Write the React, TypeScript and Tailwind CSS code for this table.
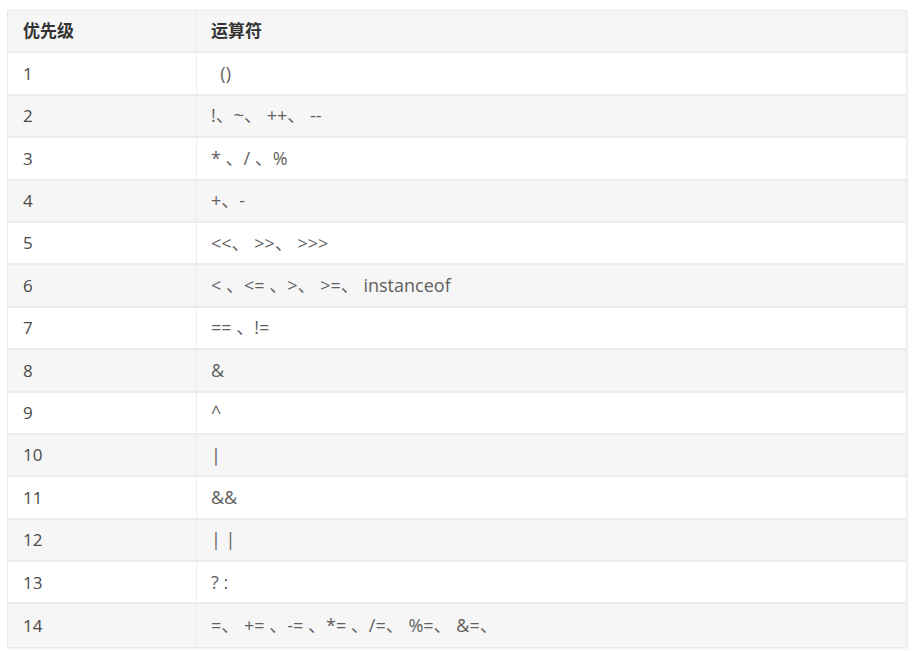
const rows: [string, string][] = [
  ["1", "  ()"],
  ["2", "!、~、 ++、 --"],
  ["3", "* 、/ 、%"],
  ["4", "+、-"],
  ["5", "<<、 >>、 >>>"],
  ["6", "< 、<= 、>、 >=、 instanceof"],
  ["7", "== 、!="],
  ["8", "&"],
  ["9", "^"],
  ["10", "|"],
  ["11", "&&"],
  ["12", "| |"],
  ["13", "? :"],
  ["14", "=、 += 、-= 、*= 、/=、 %=、 &=、"],
];

const App = () => {
  return (
    <div className="w-[917px] h-[651px] bg-white pt-[10px] pl-[7px]" style={{ fontFamily: '"Open Sans", "Noto Sans CJK SC", sans-serif' }}>
      <div className="w-[900px] border border-[#e9e9e9] shadow-[1px_1px_2px_rgba(0,0,0,0.06)]">
        <div className="grid grid-cols-[189px_1fr] h-[42.4px] bg-[#f6f6f6] border-b-2 border-[#ececec] text-[17px] font-bold text-[#333]">
          <div className="flex items-center pl-[15px] border-r border-[#ececec]">优先级</div>
          <div className="flex items-center pl-[14px]">运算符</div>
        </div>
        {rows.map(([level, ops], i) => (
          <div
            key={level}
            className={`grid grid-cols-[189px_1fr] h-[42.4px] ${i % 2 === 0 ? "bg-white" : "bg-[#f6f6f6]"} ${i < rows.length - 1 ? "border-b-2 border-[#ececec]" : ""}`}
          >
            <div className="flex items-center pl-[15px] border-r border-[#ececec] text-[17px] text-[#4a4a4a]">{level}</div>
            <div className="flex items-center pl-[14px] whitespace-pre text-[18px] text-[#5f5f5f]">{ops}</div>
          </div>
        ))}
      </div>
    </div>
  );
};

export default App;
